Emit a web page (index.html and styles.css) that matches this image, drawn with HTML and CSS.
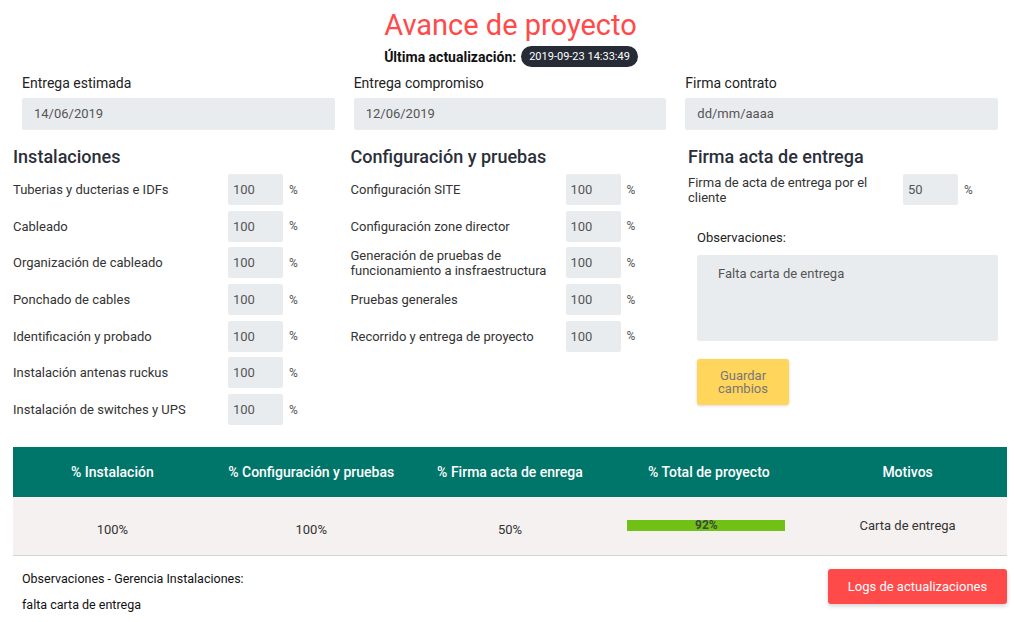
FILE: index.html
```html
<!DOCTYPE html>
<html lang="es">
<head>
<meta charset="utf-8">
<title>Avance de proyecto</title>
<link rel="stylesheet" href="styles.css">
</head>
<body>
<header class="header">
  <h1 class="title">Avance de proyecto</h1>
  <div class="updated">
    <span class="updated-label">Última actualización:</span>
    <span class="badge">2019-09-23 14:33:49</span>
  </div>
</header>

<section class="dates">
  <div class="date-field">
    <label class="date-label">Entrega estimada</label>
    <div class="date-input">14/06/2019</div>
  </div>
  <div class="date-field">
    <label class="date-label">Entrega compromiso</label>
    <div class="date-input">12/06/2019</div>
  </div>
  <div class="date-field">
    <label class="date-label">Firma contrato</label>
    <div class="date-input">dd/mm/aaaa</div>
  </div>
</section>

<section class="sections">
  <div class="group">
    <h2 class="group-title">Instalaciones</h2>
    <div class="rows">
      <div class="row"><span class="row-label">Tuberias y ducterias e IDFs</span><span class="pct-input">100</span><span class="pct">%</span></div>
      <div class="row"><span class="row-label">Cableado</span><span class="pct-input">100</span><span class="pct">%</span></div>
      <div class="row"><span class="row-label">Organización de cableado</span><span class="pct-input">100</span><span class="pct">%</span></div>
      <div class="row"><span class="row-label">Ponchado de cables</span><span class="pct-input">100</span><span class="pct">%</span></div>
      <div class="row"><span class="row-label">Identificación y probado</span><span class="pct-input">100</span><span class="pct">%</span></div>
      <div class="row"><span class="row-label">Instalación antenas ruckus</span><span class="pct-input">100</span><span class="pct">%</span></div>
      <div class="row"><span class="row-label">Instalación de switches y UPS</span><span class="pct-input">100</span><span class="pct">%</span></div>
    </div>
  </div>
  <div class="group">
    <h2 class="group-title">Configuración y pruebas</h2>
    <div class="rows">
      <div class="row"><span class="row-label">Configuración SITE</span><span class="pct-input">100</span><span class="pct">%</span></div>
      <div class="row"><span class="row-label">Configuración zone director</span><span class="pct-input">100</span><span class="pct">%</span></div>
      <div class="row"><span class="row-label">Generación de pruebas de funcionamiento a insfraestructura</span><span class="pct-input">100</span><span class="pct">%</span></div>
      <div class="row"><span class="row-label">Pruebas generales</span><span class="pct-input">100</span><span class="pct">%</span></div>
      <div class="row"><span class="row-label">Recorrido y entrega de proyecto</span><span class="pct-input">100</span><span class="pct">%</span></div>
    </div>
  </div>
  <div class="group">
    <h2 class="group-title">Firma acta de entrega</h2>
    <div class="rows">
      <div class="row"><span class="row-label">Firma de acta de entrega por el cliente</span><span class="pct-input">50</span><span class="pct">%</span></div>
    </div>
    <div class="obs">
      <div class="obs-label">Observaciones:</div>
      <div class="obs-box">Falta carta de entrega</div>
      <button class="save-btn">Guardar<br>cambios</button>
    </div>
  </div>
</section>

<table class="summary">
  <thead>
    <tr>
      <th>% Instalación</th>
      <th>% Configuración y pruebas</th>
      <th>% Firma acta de enrega</th>
      <th>% Total de proyecto</th>
      <th>Motivos</th>
    </tr>
  </thead>
  <tbody>
    <tr>
      <td class="num">100%</td>
      <td class="num">100%</td>
      <td class="num">50%</td>
      <td><div class="bar"><div class="bar-fill" style="width:100%">92%</div></div></td>
      <td>Carta de entrega</td>
    </tr>
  </tbody>
</table>

<footer class="footer">
  <div class="footer-notes">
    <div class="footer-line">Observaciones - Gerencia Instalaciones:</div>
    <div class="footer-line">falta carta de entrega</div>
  </div>
  <button class="logs-btn">Logs de actualizaciones</button>
</footer>
</body>
</html>
```

FILE: styles.css
```css
* { box-sizing: border-box; }

body {
  margin: 0;
  font-family: Roboto, "Noto Sans", "Liberation Sans", sans-serif;
  color: #333;
  background: #fff;
}

.header {
  padding-top: 8px;
  text-align: center;
}

.title {
  margin: 0;
  padding-left: 7px;
  font-size: 29px;
  line-height: 34px;
  font-weight: 400;
  color: #ff4a4a;
}

.updated {
  margin-top: 4px;
  height: 21px;
  padding-left: 8px;
  display: flex;
  justify-content: center;
  align-items: center;
  gap: 5px;
}

.updated-label {
  font-size: 14px;
  font-weight: 700;
  color: #111;
}

.badge {
  display: inline-flex;
  align-items: center;
  height: 21px;
  padding: 0 8px;
  border-radius: 11px;
  background: #262b36;
  color: #fff;
  font-size: 11px;
}

.dates {
  margin-top: 6px;
  padding: 0 16px 0 22px;
  display: grid;
  grid-template-columns: repeat(3, 1fr);
  column-gap: 19px;
}

.date-label {
  display: block;
  font-size: 14px;
  line-height: 20px;
  color: #222;
}

.date-input {
  margin-top: 5px;
  height: 32px;
  line-height: 32px;
  padding-left: 12px;
  background: #e9ecef;
  border-radius: 2px;
  font-size: 13px;
  color: #555;
}

.sections {
  margin-top: 15px;
  padding: 0 13px;
  display: grid;
  grid-template-columns: 313px 313px 313px;
  column-gap: 24.5px;
}

.group-title {
  margin: 0;
  font-size: 18px;
  line-height: 24px;
  font-weight: 500;
  color: #2a2f3a;
}

.rows {
  margin-top: 5px;
  display: flex;
  flex-direction: column;
  gap: 5.7px;
}

.row {
  display: grid;
  grid-template-columns: 215px 55px auto;
  align-items: center;
  min-height: 31px;
}

.row-label {
  font-size: 13px;
  line-height: 15px;
  color: #333;
  padding-right: 12px;
}

.pct-input {
  height: 31px;
  line-height: 31px;
  padding-left: 5px;
  background: #e9ecef;
  border-radius: 2px;
  font-size: 13px;
  color: #555;
}

.pct {
  padding-left: 6px;
  font-size: 12px;
  color: #555;
}

.obs {
  margin-top: 25px;
  padding-left: 9px;
}

.obs-label {
  font-size: 13px;
  line-height: 16px;
  color: #222;
}

.obs-box {
  margin-top: 9px;
  height: 86px;
  width: 301px;
  padding: 11px 21px;
  background: #e9ecef;
  border-radius: 2px;
  font-size: 13px;
  color: #555;
}

.save-btn {
  margin-top: 18px;
  width: 92px;
  height: 46px;
  border: 0;
  border-radius: 3px;
  background: #ffd55c;
  box-shadow: 0 1px 3px rgba(0, 0, 0, 0.15);
  font-family: inherit;
  font-size: 13px;
  line-height: 13px;
  color: #777;
}

.summary {
  margin: 22px 7px 0 13px;
  width: 994px;
  border-collapse: collapse;
  table-layout: fixed;
}

.summary th {
  height: 50px;
  background: #00756a;
  color: #fff;
  font-size: 14px;
  font-weight: 500;
  text-align: center;
}

.summary td {
  height: 58px;
  background: #f5f1f0;
  border-bottom: 1px solid #d4d4d4;
  font-size: 13px;
  color: #333;
  text-align: center;
  vertical-align: middle;
}

.summary td.num {
  padding-top: 8px;
}

.bar {
  width: 158px;
  height: 11px;
  margin-left: 17px;
  background: #e0e0e0;
}

.bar-fill {
  height: 11px;
  background: #71c016;
  font-size: 12px;
  line-height: 11px;
  font-weight: 700;
  color: #3a4a3a;
  text-align: center;
}

.footer {
  display: flex;
  justify-content: space-between;
  align-items: flex-start;
  padding: 0 7px 0 22px;
}

.footer-notes {
  margin-top: 10px;
}

.footer-line {
  font-size: 12.5px;
  line-height: 26px;
  color: #111;
}

.logs-btn {
  margin-top: 13px;
  width: 179px;
  height: 35px;
  border: 0;
  border-radius: 3px;
  background: #ff4a4a;
  box-shadow: 0 2px 4px rgba(0, 0, 0, 0.18);
  font-family: inherit;
  font-size: 13px;
  color: #fff;
}
```
